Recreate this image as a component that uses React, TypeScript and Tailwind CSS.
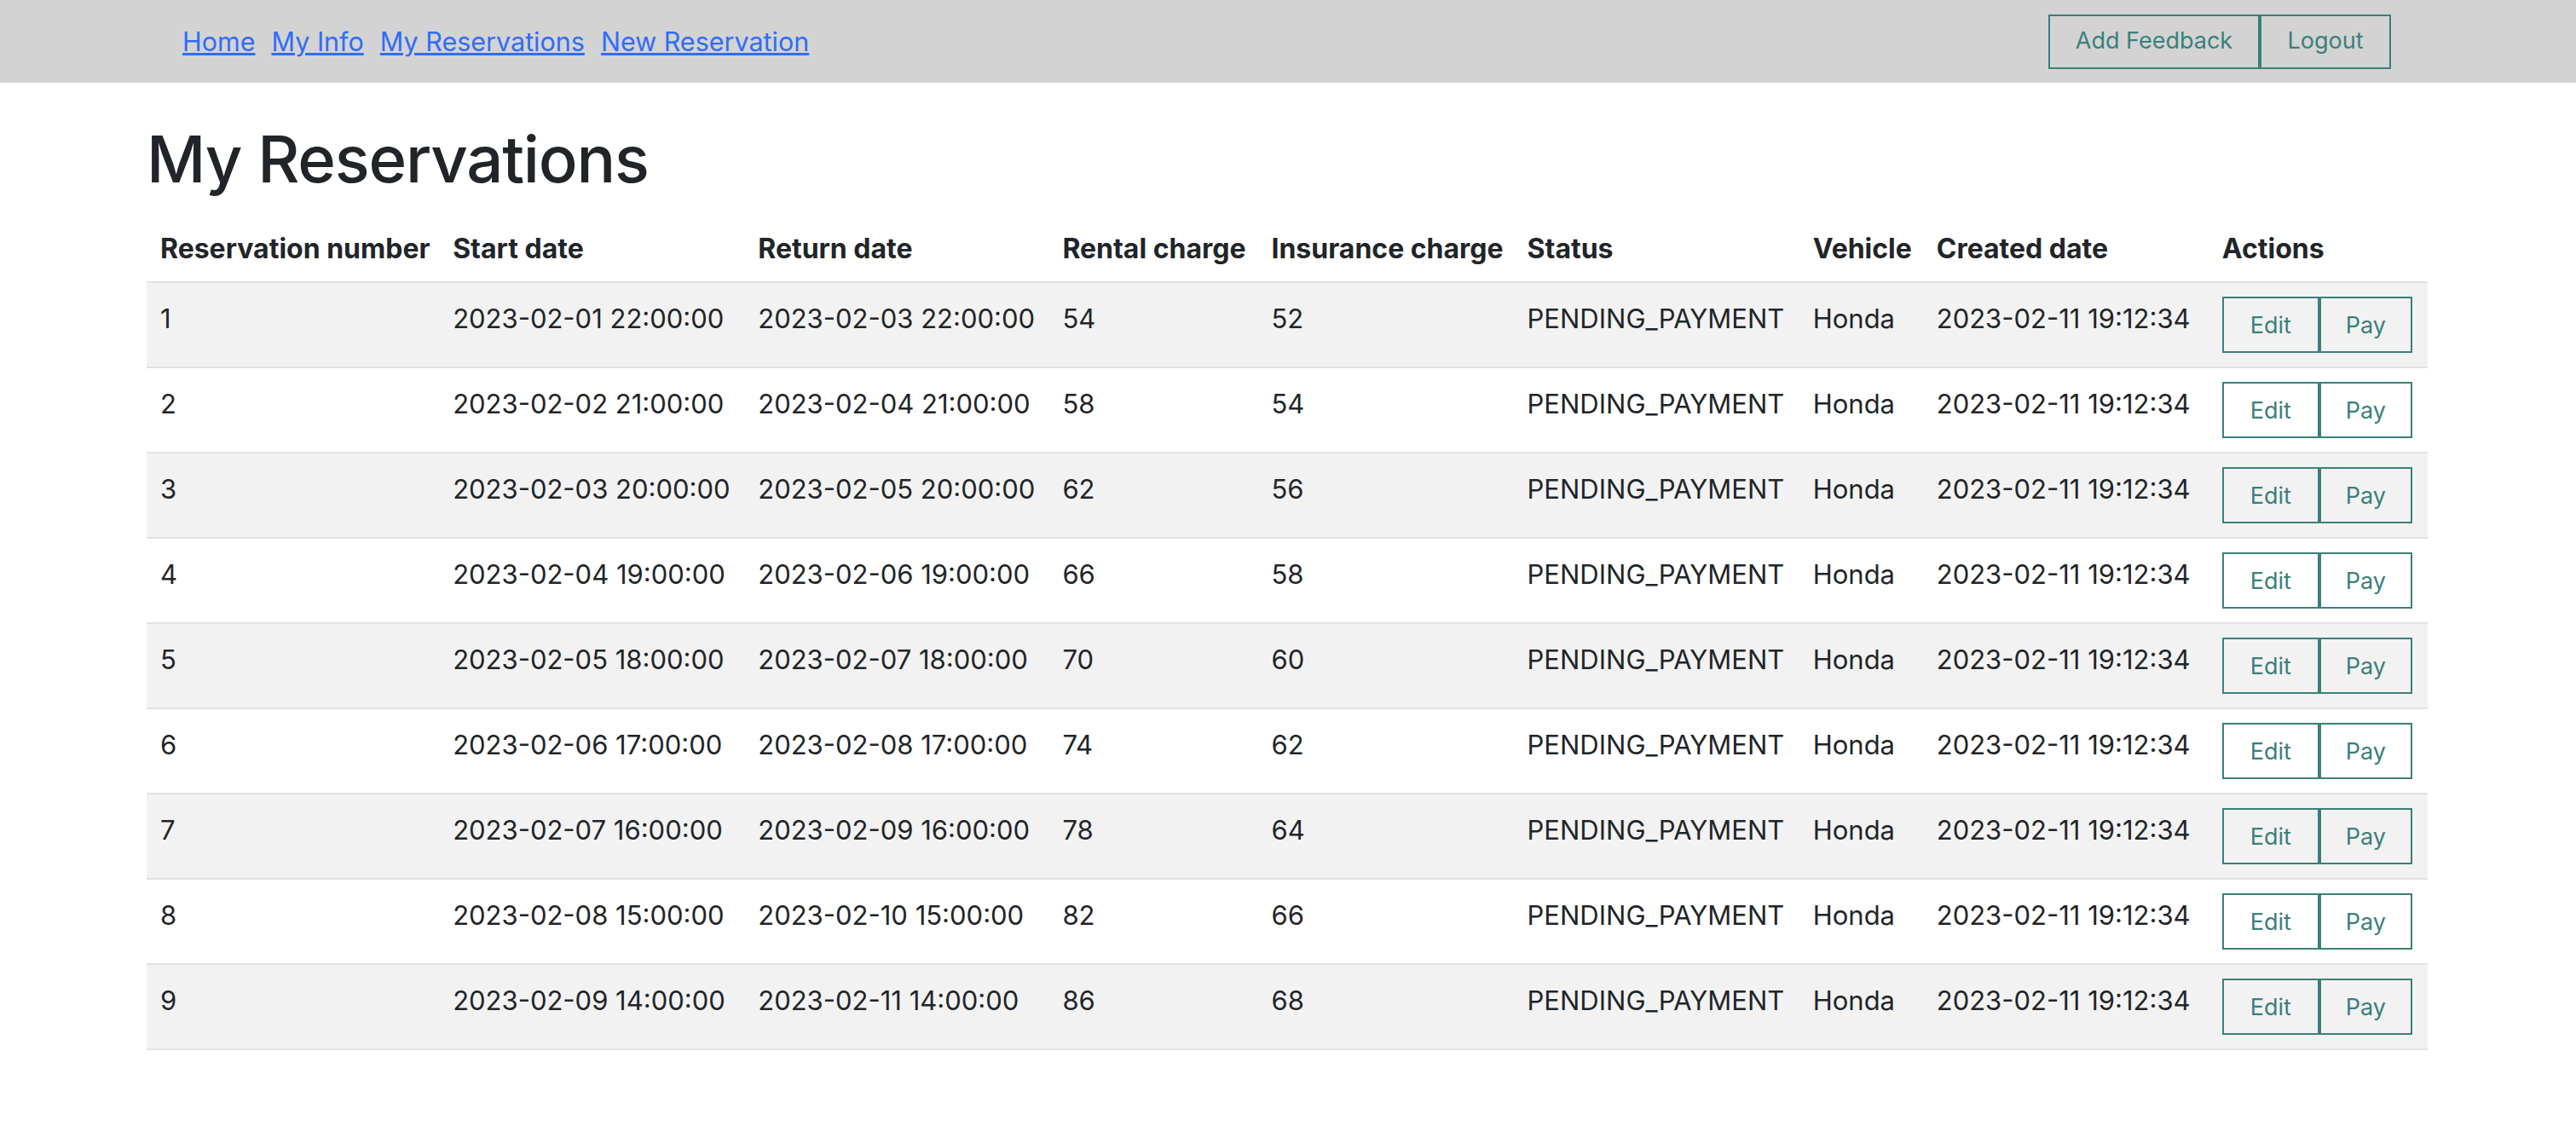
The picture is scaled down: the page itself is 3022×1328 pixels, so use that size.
import React from 'react';

type Reservation = {
  id: number;
  start: string;
  end: string;
  rental: number;
  insurance: number;
  status: string;
  vehicle: string;
  created: string;
};

const reservations: Reservation[] = Array.from({ length: 9 }, (_, i) => {
  const d1 = String(i + 1).padStart(2, '0');
  const d2 = String(i + 3).padStart(2, '0');
  const h = String(22 - i).padStart(2, '0');
  return {
    id: i + 1,
    start: `2023-02-${d1} ${h}:00:00`,
    end: `2023-02-${d2} ${h}:00:00`,
    rental: 54 + i * 4,
    insurance: 52 + i * 2,
    status: 'PENDING_PAYMENT',
    vehicle: 'Honda',
    created: '2023-02-11 19:12:34',
  };
});

const columns = [
  { label: 'Reservation number', w: 'w-[343px]' },
  { label: 'Start date', w: 'w-[358px]' },
  { label: 'Return date', w: 'w-[357px]' },
  { label: 'Rental charge', w: 'w-[245px]' },
  { label: 'Insurance charge', w: 'w-[300px]' },
  { label: 'Status', w: 'w-[335px]' },
  { label: 'Vehicle', w: 'w-[145px]' },
  { label: 'Created date', w: 'w-[335px]' },
  { label: 'Actions', w: 'w-[257px]' },
];

const cell = 'px-[16px] pt-[19px] pb-[14px] align-top';

export default function App() {
  return (
    <div className="min-h-screen bg-white text-[#212529] font-['Inter','Liberation_Sans',sans-serif]">
      {/* Top nav */}
      <nav className="h-[97px] bg-[#d3d3d3] flex items-center justify-between pl-[214px] pr-[217px]">
        <div className="flex items-center gap-[19px] text-[30.5px] leading-[48px]">
          <a href="#" className="text-[#2f6df6] underline">Home</a>
          <a href="#" className="text-[#2f6df6] underline">My Info</a>
          <a href="#" className="text-[#2f6df6] underline">My Reservations</a>
          <a href="#" className="text-[#2f6df6] underline">New Reservation</a>
        </div>
        <div className="flex">
          <button className="h-[64px] w-[248px] border-2 border-[#3b7f7b] text-[#3b7f7b] text-[27px]">
            Add Feedback
          </button>
          <button className="h-[64px] w-[154px] border-2 border-[#3b7f7b] text-[#3b7f7b] text-[27px]">
            Logout
          </button>
        </div>
      </nav>

      {/* Page content */}
      <main className="pl-[172px] pr-[174px]">
        <h1 className="mt-[44px] mb-[21px] text-[76px] leading-[1.2] font-medium tracking-[-1.2px]">
          My Reservations
        </h1>

        <table className="w-full table-fixed border-collapse text-[31px] leading-[45px]">
          <thead>
            <tr className="border-b-2 border-[#dee2e6]">
              {columns.map((c) => (
                <th key={c.label} className={`${c.w} text-left font-bold text-[32px] px-[16px] py-[16px] whitespace-nowrap`}>
                  {c.label}
                </th>
              ))}
            </tr>
          </thead>
          <tbody>
            {reservations.map((r, i) => (
              <tr key={r.id} className={`border-b-2 border-[#dee2e6] ${i % 2 === 0 ? 'bg-[#f2f2f2]' : 'bg-white'}`}>
                <td className={cell}>{r.id}</td>
                <td className={`${cell} whitespace-nowrap`}>{r.start}</td>
                <td className={`${cell} whitespace-nowrap`}>{r.end}</td>
                <td className={cell}>{r.rental}</td>
                <td className={cell}>{r.insurance}</td>
                <td className={cell}>{r.status}</td>
                <td className={cell}>{r.vehicle}</td>
                <td className={`${cell} whitespace-nowrap`}>{r.created}</td>
                <td className="px-[16px] py-[16px] align-top">
                  <div className="flex">
                    <button className="h-[66px] w-[114px] border-2 border-[#3b7f7b] text-[#3b7f7b] text-[27px]">
                      Edit
                    </button>
                    <button className="h-[66px] w-[109px] border-2 border-[#3b7f7b] text-[#3b7f7b] text-[27px]">
                      Pay
                    </button>
                  </div>
                </td>
              </tr>
            ))}
          </tbody>
        </table>
      </main>
    </div>
  );
}
